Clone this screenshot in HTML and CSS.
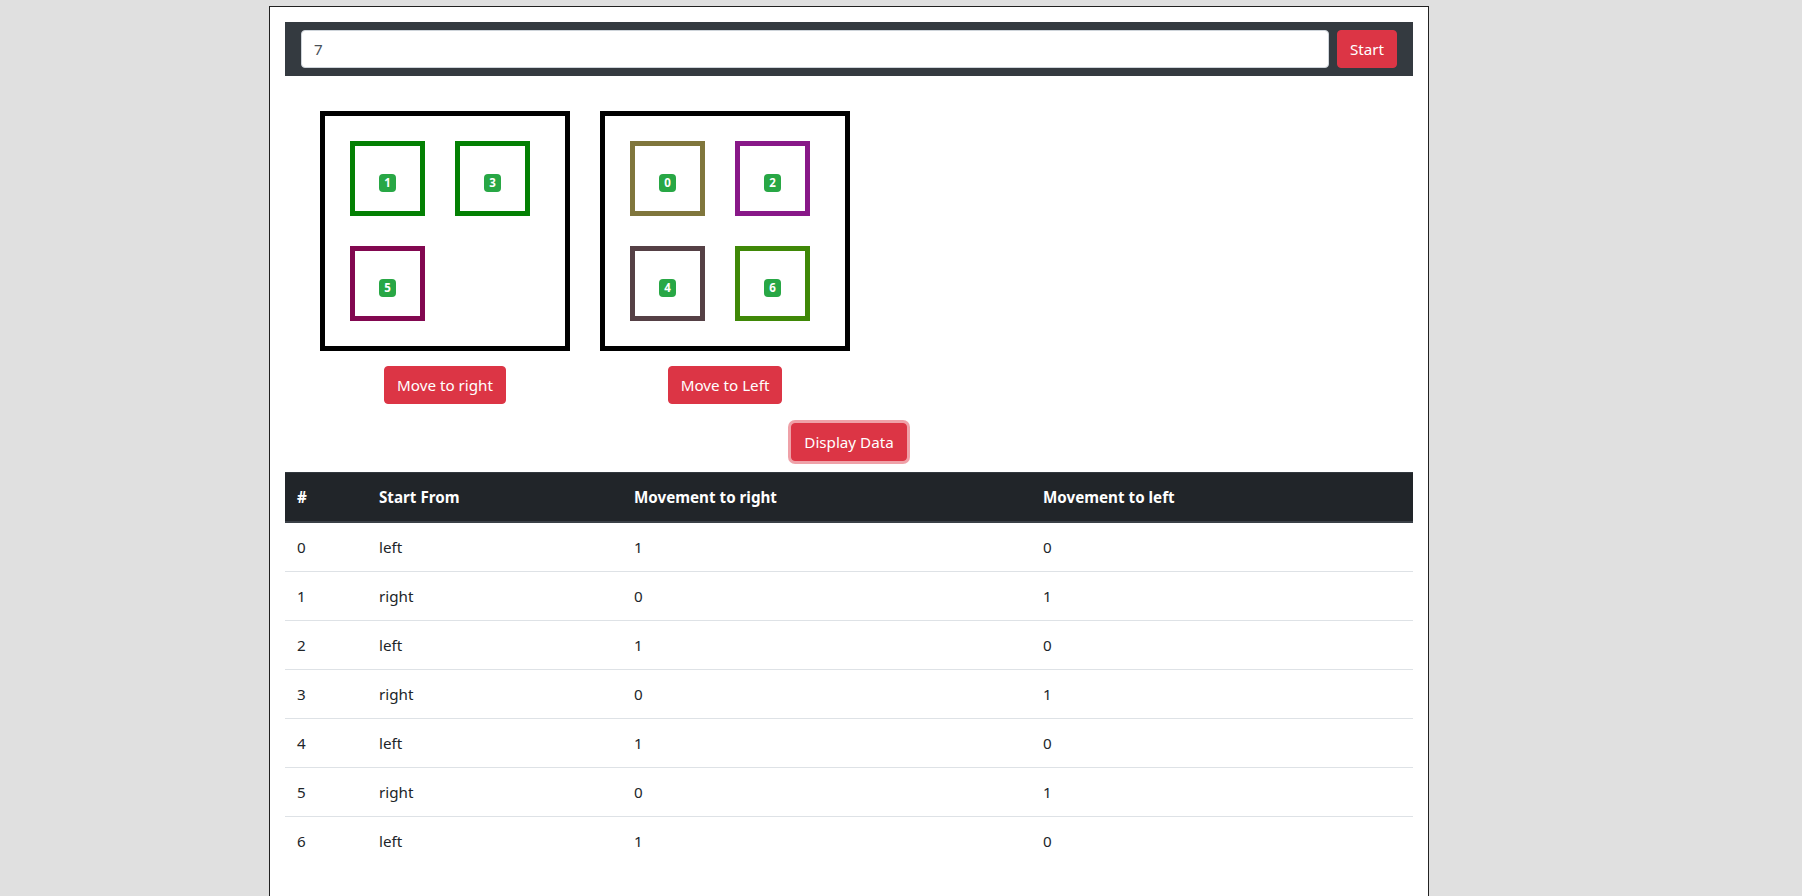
FILE: index.html
```html
<!DOCTYPE html>
<html lang="en">
<head>
<meta charset="utf-8">
<title>Boxes</title>
<link rel="stylesheet" href="styles.css">
</head>
<body>
<div class="card">
  <div class="navbar">
    <input class="count-input" type="text" value="7">
    <button class="btn btn-danger">Start</button>
  </div>

  <div class="board">
    <div class="column">
      <div class="box">
        <div class="item c-green"><span class="badge">1</span></div>
        <div class="item c-green"><span class="badge">3</span></div>
        <div class="item c-plum"><span class="badge">5</span></div>
      </div>
      <button class="btn btn-danger move-btn">Move to right</button>
    </div>
    <div class="column">
      <div class="box">
        <div class="item c-olive"><span class="badge">0</span></div>
        <div class="item c-purple"><span class="badge">2</span></div>
        <div class="item c-brown"><span class="badge">4</span></div>
        <div class="item c-leaf"><span class="badge">6</span></div>
      </div>
      <button class="btn btn-danger move-btn">Move to Left</button>
    </div>
  </div>

  <div class="actions">
    <button class="btn btn-danger btn-focus">Display Data</button>
  </div>

  <table class="data-table">
    <colgroup>
      <col class="col-idx"><col class="col-start"><col class="col-right"><col>
    </colgroup>
    <thead>
      <tr><th>#</th><th>Start From</th><th>Movement to right</th><th>Movement to left</th></tr>
    </thead>
    <tbody>
      <tr><td>0</td><td>left</td><td>1</td><td>0</td></tr>
      <tr><td>1</td><td>right</td><td>0</td><td>1</td></tr>
      <tr><td>2</td><td>left</td><td>1</td><td>0</td></tr>
      <tr><td>3</td><td>right</td><td>0</td><td>1</td></tr>
      <tr><td>4</td><td>left</td><td>1</td><td>0</td></tr>
      <tr><td>5</td><td>right</td><td>0</td><td>1</td></tr>
      <tr><td>6</td><td>left</td><td>1</td><td>0</td></tr>
    </tbody>
  </table>
</div>
</body>
</html>
```

FILE: styles.css
```css
* { box-sizing: border-box; }

html, body {
  margin: 0;
  background: #e0e0e0;
  font-family: "Noto Sans", "Liberation Sans", sans-serif;
  font-size: 15.2px;
  line-height: 24px;
  color: #212529;
}

.card {
  width: 1160px;
  min-height: 920px;
  margin: 6px 0 0 269px;
  padding: 15px 15px 40px;
  background: #fff;
  border: 1px solid #222;
}

.navbar {
  display: flex;
  gap: 8px;
  padding: 8px 16px;
  background: #343a40;
}

.count-input {
  flex: 1;
  height: 38px;
  padding: 6px 12px;
  border: 1px solid #ced4da;
  border-radius: 4px;
  font: inherit;
  color: #495057;
  background: #fff;
}

.btn {
  display: inline-block;
  height: 38px;
  padding: 6px 12px;
  border: 1px solid transparent;
  border-radius: 4px;
  font: inherit;
  line-height: 24px;
  cursor: pointer;
}

.btn-danger {
  background: #dc3545;
  border-color: #dc3545;
  color: #fff;
}

.btn-focus {
  box-shadow: 0 0 0 3px rgba(225, 83, 97, 0.55);
}

.board {
  display: flex;
  gap: 30px;
  padding: 35px 0 0 35px;
}

.column {
  display: flex;
  flex-direction: column;
  align-items: center;
  width: 250px;
}

.box {
  display: grid;
  grid-template-columns: 75px 75px;
  grid-auto-rows: 75px;
  gap: 30px;
  align-content: start;
  width: 250px;
  height: 240px;
  padding: 25px 0 0 25px;
  border: 5px solid #000;
}

.item {
  display: flex;
  align-items: center;
  justify-content: center;
  padding-top: 9px;
  border: 5px solid #008000;
}

.c-green { border-color: #038003; }
.c-plum { border-color: #820850; }
.c-olive { border-color: #80763c; }
.c-purple { border-color: #881888; }
.c-brown { border-color: #554045; }
.c-leaf { border-color: #3f8807; }

.badge {
  display: inline-block;
  padding: 3px 4.8px;
  border-radius: 4px;
  background: #28a745;
  color: #fff;
  font-size: 11.5px;
  font-weight: 700;
  line-height: 12px;
}

.move-btn {
  margin-top: 15px;
}

.actions {
  display: flex;
  justify-content: center;
  margin: 19px 0 11px;
}

.data-table {
  width: 100%;
  border-collapse: collapse;
}

.col-idx { width: 82px; }
.col-start { width: 255px; }
.col-right { width: 409px; }

.data-table th,
.data-table td {
  padding: 12px;
  text-align: left;
  vertical-align: top;
  line-height: 24px;
}

.data-table th {
  background: #212529;
  color: #fff;
  font-weight: 700;
  border-top: 1px solid #32383e;
  border-bottom: 2px solid #3a4047;
}

.data-table td {
  border-top: 1px solid #dee2e6;
}
```
